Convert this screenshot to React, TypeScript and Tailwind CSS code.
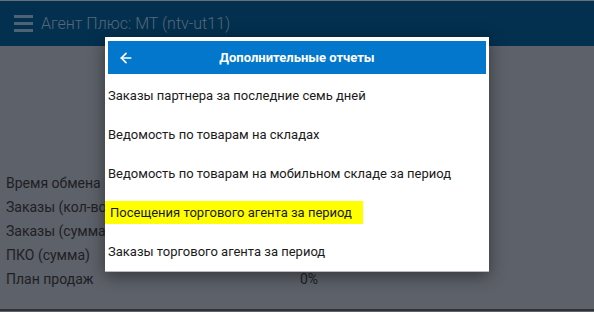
import { ArrowLeft } from 'lucide-react';

const stats = [
  { label: 'Время обмена', value: '' },
  { label: 'Заказы (кол-во)', value: '' },
  { label: 'Заказы (сумма)', value: '' },
  { label: 'ПКО (сумма)', value: '' },
  { label: 'План продаж', value: '0%' },
];

const reports = [
  'Заказы партнера за последние семь дней',
  'Ведомость по товарам на складах',
  'Ведомость по товарам на мобильном складе за период',
  'Посещения торгового агента за период',
  'Заказы торгового агента за период',
];

const App = () => {
  return (
    <div
      className="relative w-[594px] h-[312px] overflow-hidden bg-[#5d6169] flex flex-col"
      style={{ fontFamily: 'Roboto, "Noto Sans", sans-serif' }}
    >
      <div className="h-px bg-[#6a707a]" />
      <div className="h-[45px] bg-[#03304f] flex items-center pl-[14px] gap-[8px]">
        <div className="flex flex-col gap-[4px] w-[19px]">
          <div className="h-[3px] bg-[#4c6275]" />
          <div className="h-[3px] bg-[#4c6275]" />
          <div className="h-[3px] bg-[#4c6275]" />
        </div>
        <span className="text-[16px] font-light text-[#56697a]">Агент Плюс: МТ (ntv-ut11)</span>
      </div>

      <div className="flex-1 flex flex-col pt-[125px] pl-[6px]">
        {stats.map((s, i) => (
          <div key={i} className="h-[24px] flex items-center text-[14px] text-[#1d2025]">
            <span className="w-[294px] whitespace-nowrap">{s.label}</span>
            <span>{s.value}</span>
          </div>
        ))}
      </div>
      <div className="h-[2px] bg-[#2f3237]" />
      <div className="h-px bg-[#5d6169]" />

      <div className="absolute left-[105px] top-[37px] w-[384px] h-[235px] bg-white shadow-[0_4px_16px_rgba(0,0,0,0.45)] border-b border-[#b8bcc6] flex flex-col pt-[4px] px-[3px]">
        <div className="h-[33px] bg-[#0277cc] relative flex items-center justify-center">
          <ArrowLeft className="absolute left-[10px] top-[9px] w-[16px] h-[16px] text-white" strokeWidth={2.6} />
          <span className="text-[13px] font-bold text-white">Дополнительные отчеты</span>
        </div>
        <div className="pt-[2px] flex flex-col">
          {reports.map((r, i) => (
            <div key={i} className="h-[39px] flex items-center text-[13px] text-[#1a1a1a]">
              {i === 3 ? (
                <span className="bg-[#ffff00] -ml-[3px] pl-[5px] pr-[11px] h-[23px] flex items-center">{r}</span>
              ) : (
                <span className="whitespace-nowrap">{r}</span>
              )}
            </div>
          ))}
        </div>
      </div>
    </div>
  );
};

export default App;
